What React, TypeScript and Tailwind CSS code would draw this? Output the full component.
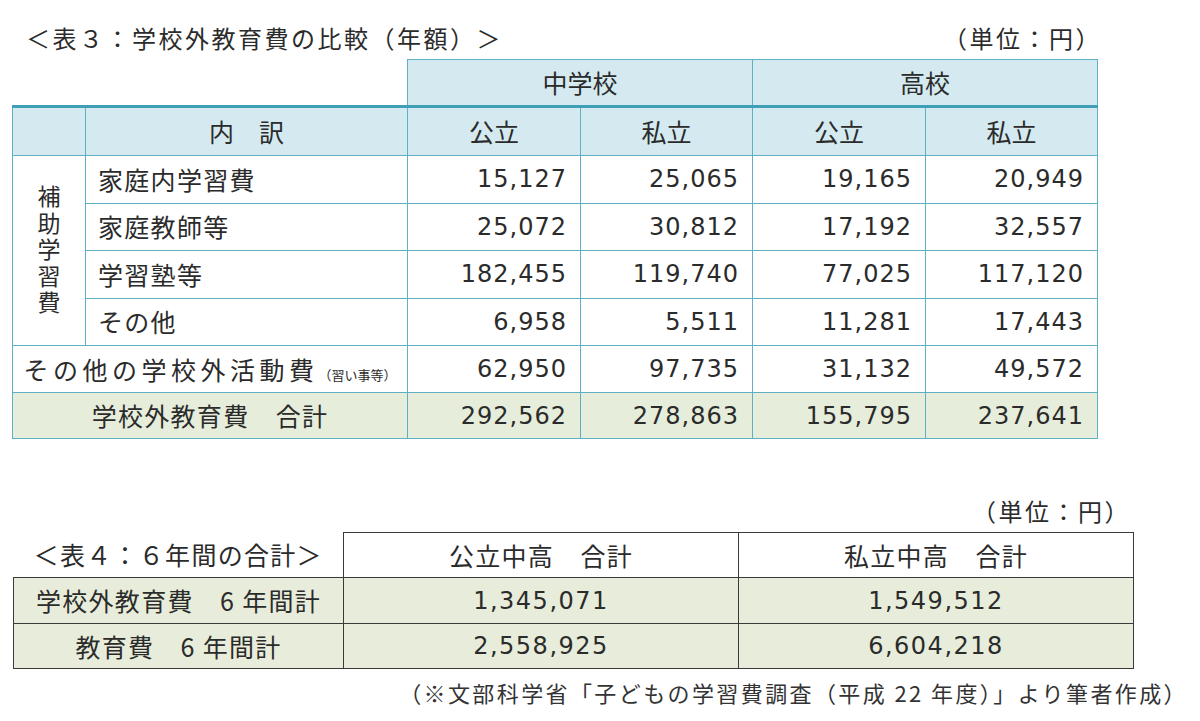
import React from "react";

const FONT = "font-['Noto_Sans_CJK_JP','Noto_Sans',sans-serif]";
const DIGITS = "font-['DejaVu_Sans','Noto_Sans_CJK_JP',sans-serif]";

interface Row3 {
  label: string;
  values: string[];
}

const SUB_ROWS: Row3[] = [
  { label: "家庭内学習費", values: ["15,127", "25,065", "19,165", "20,949"] },
  { label: "家庭教師等", values: ["25,072", "30,812", "17,192", "32,557"] },
  { label: "学習塾等", values: ["182,455", "119,740", "77,025", "117,120"] },
  { label: "その他", values: ["6,958", "5,511", "11,281", "17,443"] },
];

const OTHER_ACTIVITY = ["62,950", "97,735", "31,132", "49,572"];
const TOTAL_3 = ["292,562", "278,863", "155,795", "237,641"];

const cell3 = "border border-[#5eb0c4]";
const num3 = `${cell3} ${DIGITS} text-right pr-[13px] text-[24px] tracking-[1px]`;
const head2 = `${cell3} border-t-[3px] border-t-[#3f9fb7] bg-[#d4eaf0] font-normal`;

const Table3 = () => (
  <div className="ml-[12px] w-[1085px]">
    <div className="mt-[22px] flex h-[32px] items-center justify-between pl-[14px] text-[24px] tracking-[2.5px]">
      <span>＜表３：学校外教育費の比較（年額）＞</span>
      <span className="mr-[-5px]">（単位：円）</span>
    </div>
    <table className="mt-[5px] w-[1085px] table-fixed border-collapse text-[25px] leading-none">
      <colgroup>
        <col className="w-[73px]" />
        <col className="w-[322px]" />
        <col className="w-[173px]" />
        <col className="w-[172px]" />
        <col className="w-[173px]" />
        <col className="w-[172px]" />
      </colgroup>
      <thead>
        <tr className="h-[47px]">
          <th colSpan={2} className="border-none" />
          <th colSpan={2} className={`${cell3} bg-[#d4eaf0] font-normal`}>中学校</th>
          <th colSpan={2} className={`${cell3} bg-[#d4eaf0] font-normal`}>高校</th>
        </tr>
        <tr className="h-[49px]">
          <th className={head2} />
          <th className={head2}>内　訳</th>
          {["公立", "私立", "公立", "私立"].map((h, i) => (
            <th key={i} className={head2}>
              {h}
            </th>
          ))}
        </tr>
      </thead>
      <tbody>
        {SUB_ROWS.map((row, i) => (
          <tr key={row.label} className="h-[47.5px]">
            {i === 0 && (
              <td rowSpan={4} className={`${cell3} text-center align-middle`}>
                <span className="inline-block pt-[4px] text-[23px] leading-[26px] tracking-[3.5px] [writing-mode:vertical-rl]">
                  補助学習費
                </span>
              </td>
            )}
            <td className={`${cell3} pl-[12px] tracking-[1.3px]`}>{row.label}</td>
            {row.values.map((v, j) => (
              <td key={j} className={num3}>{v}</td>
            ))}
          </tr>
        ))}
        <tr className="h-[47px]">
          <td colSpan={2} className={`${cell3} text-center`}>
            <span className="tracking-[4.5px]">その他の学校外活動費</span>
            <span className="text-[13px]">（習い事等）</span>
          </td>
          {OTHER_ACTIVITY.map((v, j) => (
            <td key={j} className={num3}>{v}</td>
          ))}
        </tr>
        <tr className="h-[46px] bg-[#e6eddb]">
          <td colSpan={2} className={`${cell3} text-center tracking-[1.3px]`}>学校外教育費　合計</td>
          {TOTAL_3.map((v, j) => (
            <td key={j} className={num3}>{v}</td>
          ))}
        </tr>
      </tbody>
    </table>
  </div>
);

const cell4 = "border-[1.5px] border-[#3a3a3a]";
const num4 = `${cell4} ${DIGITS} text-center text-[24px] tracking-[1.5px]`;

const Table4 = () => (
  <div className="ml-[13px] w-[1120px]">
    <div className="mt-[56px] flex h-[32px] items-center justify-end pr-[2px] text-[24px] tracking-[2.5px]">
      （単位：円）
    </div>
    <table className="mt-[5px] w-[1120px] table-fixed border-collapse text-[25px] leading-none">
      <colgroup>
        <col className="w-[330px]" />
        <col className="w-[395px]" />
        <col className="w-[395px]" />
      </colgroup>
      <tbody>
        <tr className="h-[45px]">
          <td className="border-none text-center tracking-[1.3px]">＜表４：６年間の合計＞</td>
          <td className={`${cell4} text-center tracking-[1.3px]`}>公立中高　合計</td>
          <td className={`${cell4} text-center tracking-[1.3px]`}>私立中高　合計</td>
        </tr>
        <tr className="h-[46px] bg-[#e7edda]">
          <td className={`${cell4} text-center tracking-[1.3px]`}>学校外教育費　6 年間計</td>
          <td className={num4}>1,345,071</td>
          <td className={num4}>1,549,512</td>
        </tr>
        <tr className="h-[45px] bg-[#e7edda]">
          <td className={`${cell4} text-center tracking-[1.3px]`}>教育費　6 年間計</td>
          <td className={num4}>2,558,925</td>
          <td className={num4}>6,604,218</td>
        </tr>
      </tbody>
    </table>
  </div>
);

export default function App() {
  return (
    <div className={`h-[721px] w-[1200px] overflow-hidden bg-white text-[#2b2b2b] ${FONT}`}>
      <Table3 />
      <Table4 />
      <div className="mt-[8px] pr-[12px] text-right text-[22px] leading-[30px] tracking-[2.4px] text-[#333]">
        （※文部科学省「子どもの学習費調査（平成 22 年度）」より筆者作成）
      </div>
    </div>
  );
}
